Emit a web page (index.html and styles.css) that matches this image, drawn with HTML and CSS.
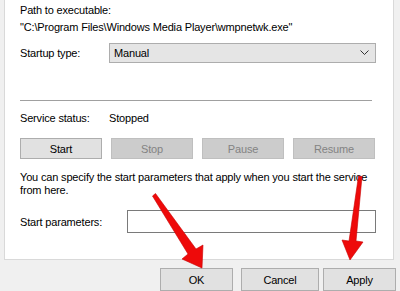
FILE: index.html
```html
<!DOCTYPE html>
<html>
<head>
<meta charset="utf-8">
<link rel="stylesheet" href="styles.css">
</head>
<body>
<div class="screen">
  <div class="panel">
    <div class="line">Path to executable:</div>
    <div class="line path">"C:\Program Files\Windows Media Player\wmpnetwk.exe"</div>
    <div class="row startup">
      <div class="label">Startup type:</div>
      <div class="select">
        <span>Manual</span>
        <svg class="chev" width="9" height="6" viewBox="0 0 9 6"><polyline points="0.5,0.5 4.5,4.5 8.5,0.5" fill="none" stroke="#333" stroke-width="1"/></svg>
      </div>
    </div>
    <div class="sep"></div>
    <div class="row status">
      <div class="label">Service status:</div>
      <div>Stopped</div>
    </div>
    <div class="btnrow">
      <div class="btn">Start</div>
      <div class="btn dis">Stop</div>
      <div class="btn dis">Pause</div>
      <div class="btn dis">Resume</div>
    </div>
    <div class="para">You can specify the start parameters that apply when you start the service<br>from here.</div>
    <div class="row params">
      <div class="label plabel">Start parameters:</div>
      <div class="input"></div>
    </div>
  </div>
  <div class="footer">
    <div class="btn fb ok">OK</div>
    <div class="btn fb cancel">Cancel</div>
    <div class="btn fb apply">Apply</div>
  </div>
  <svg class="arrows" width="400" height="291" viewBox="0 0 400 291">
    <polygon points="152.5,196 155.5,193.5 196,249 203,245 202,268 182,259 188,254" fill="#ee0a0a" stroke="#c80000" stroke-width="0.6" stroke-linejoin="round"/>
    <polygon points="358.5,176 362,176.5 356,241 363,242 350,260 342,240 349,241" fill="#ee0a0a" stroke="#c80000" stroke-width="0.6" stroke-linejoin="round"/>
  </svg>
</div>
</body>
</html>
```
FILE: styles.css
```css
html, body {
  margin: 0;
  padding: 0;
}
body {
  background: #f0f0f0;
  font-family: "Liberation Sans", Arial, sans-serif;
  font-size: 11px;
  letter-spacing: -0.17px;
  color: #000;
}
.screen {
  position: relative;
  width: 400px;
  height: 291px;
  overflow: hidden;
  background: #f0f0f0;
}
.panel {
  margin-left: 4px;
  width: 390px;
  height: 260px;
  box-sizing: border-box;
  background: #fff;
  border: 1px solid #d9d9d9;
  border-top: none;
  padding: 3px 0 0 15px;
}
.line {
  line-height: 15px;
  white-space: nowrap;
}
.path {
  margin-top: 2px;
}
.row {
  display: flex;
  align-items: center;
  white-space: nowrap;
}
.label {
  width: 89px;
}
.startup {
  margin-top: 8px;
}
.select {
  width: 267px;
  height: 20px;
  box-sizing: border-box;
  background: #e5e5e5;
  border: 1px solid #adadad;
  display: flex;
  align-items: center;
  justify-content: space-between;
  padding: 0 6px 0 4px;
}
.chev {
  display: block;
}
.sep {
  margin-top: 37px;
  width: 352px;
  height: 1px;
  background: #a0a0a0;
}
.status {
  margin-top: 10px;
  line-height: 15px;
}
.btnrow {
  display: flex;
  gap: 9px;
  margin-top: 12px;
}
.btn {
  width: 82px;
  height: 21px;
  box-sizing: border-box;
  background: #e1e1e1;
  border: 1px solid #adadad;
  display: flex;
  align-items: center;
  justify-content: center;
}
.btn.dis {
  background: #cccccc;
  border-color: #bfbfbf;
  color: #838383;
}
.para {
  margin-top: 12px;
  line-height: 13px;
  white-space: nowrap;
}
.params {
  margin-top: 13px;
}
.plabel {
  width: 107px;
}
.input {
  width: 249px;
  height: 23px;
  box-sizing: border-box;
  border: 1px solid #7a7a7a;
  background: #fff;
}
.footer {
  display: flex;
  margin-top: 8px;
  padding-left: 160px;
}
.fb {
  height: 23px;
}
.ok {
  width: 73px;
}
.cancel {
  width: 78px;
  margin-left: 8px;
}
.apply {
  width: 73px;
  margin-left: 4px;
}
.arrows {
  position: absolute;
  left: 0;
  top: 0;
  pointer-events: none;
}
```
